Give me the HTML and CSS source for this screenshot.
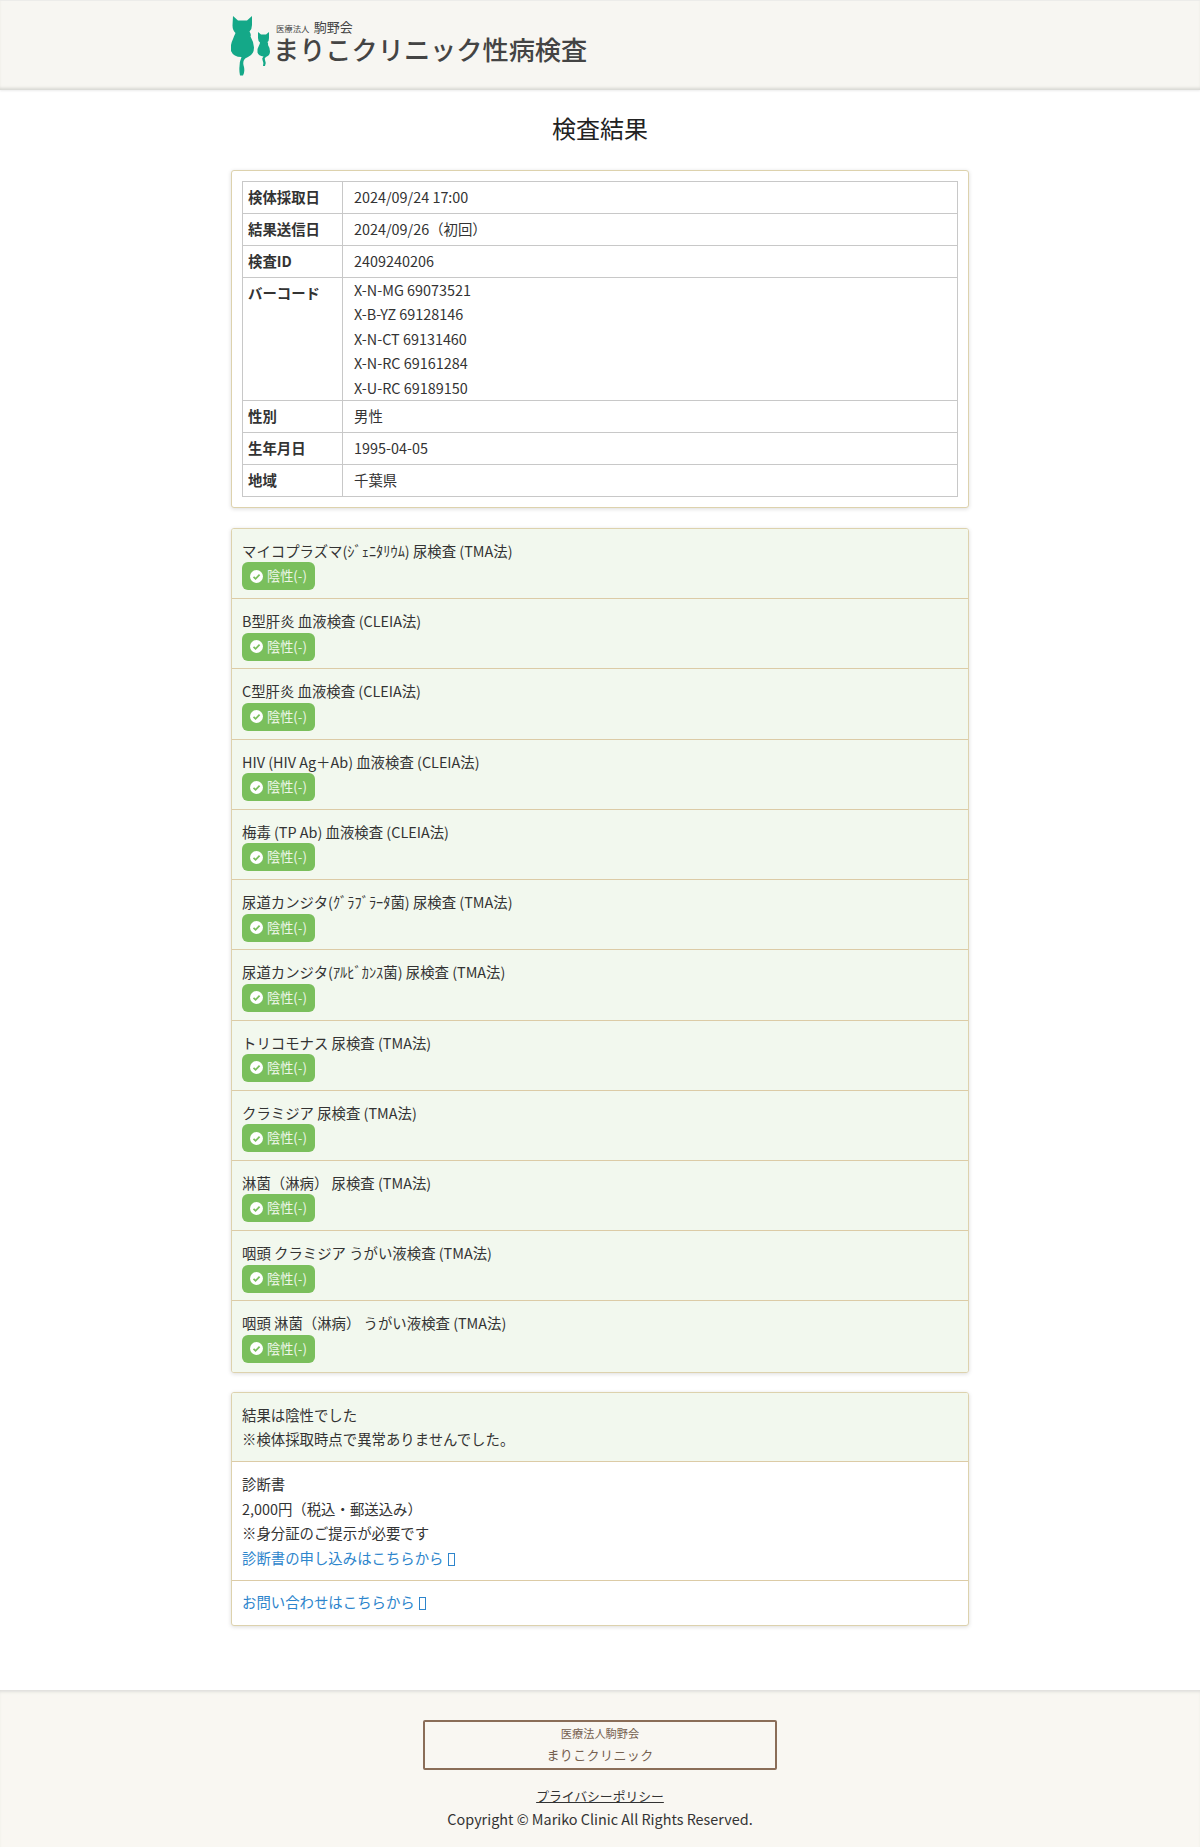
FILE: index.html
```html
<!DOCTYPE html>
<html lang="ja">
<head>
<meta charset="utf-8">
<title>検査結果</title>
<link rel="stylesheet" href="styles.css">
</head>
<body>
<svg class="defs" width="0" height="0" aria-hidden="true">
  <symbol id="check" viewBox="0 0 24 24"><circle cx="12" cy="12" r="12" fill="#fff"/><path d="M6.5 12.5l3.8 3.8 7.4-7.6" fill="none" stroke="#7abf5c" stroke-width="3.2"/></symbol>
</svg>
<header class="site-header">
  <div class="logo">
    <svg class="cats" width="42" height="62" viewBox="0 0 42 62">
      <path fill="#14a888" d="M2 1l5 4.500h9l5-4.500v9q0 4-2.500 6.500q2 3 1 5q3 5 3.500 11q0 7-6 9.500q-3 1-4 3q-1.500 3 0 7q1 5-1 8.500h-3q-1-5-0.500-9q0-5 2-9.500q-8 0-10.500-6q-1-6 2-12q1.500-4 2.500-6q-3-3-3-7.500z"/>
      <path fill="#14a888" d="M27 17l3 2.500h5l3-2.500v6q0 3-1.500 4q1 2 .5 3q2 3 2 6.500q0 4-4 5.500q-2 1-1 3q1.500 3 0 6h-2q1-3-.5-6q-1-2 1-3.500q-5-.5-6-4q-.5-4 1.500-7q1-2 1-3q-2-1.500-2-4.500z"/>
    </svg>
    <div class="logo-text">
      <div class="logo-sub"><span class="logo-sub-s">医療法人</span> <span class="logo-sub-l">駒野会</span></div>
      <div class="logo-main">まりこクリニック性病検査</div>
    </div>
  </div>
</header>

<main class="page">
  <h1 class="title">検査結果</h1>

  <section class="card card-info">
    <table class="info">
      <tr><th>検体採取日</th><td>2024/09/24 17:00</td></tr>
      <tr><th>結果送信日</th><td>2024/09/26（初回）</td></tr>
      <tr><th>検査ID</th><td>2409240206</td></tr>
      <tr><th>バーコード</th><td>X-N-MG 69073521<br>X-B-YZ 69128146<br>X-N-CT 69131460<br>X-N-RC 69161284<br>X-U-RC 69189150</td></tr>
      <tr><th>性別</th><td>男性</td></tr>
      <tr><th>生年月日</th><td>1995-04-05</td></tr>
      <tr><th>地域</th><td>千葉県</td></tr>
    </table>
  </section>

  <section class="card card-list">
    <div class="item"><div>マイコプラズマ(ｼﾞｪﾆﾀﾘｳﾑ) 尿検査 (TMA法)</div><span class="badge"><svg class="ck"><use href="#check"/></svg>陰性(-)</span></div>
    <div class="item"><div>B型肝炎 血液検査 (CLEIA法)</div><span class="badge"><svg class="ck"><use href="#check"/></svg>陰性(-)</span></div>
    <div class="item"><div>C型肝炎 血液検査 (CLEIA法)</div><span class="badge"><svg class="ck"><use href="#check"/></svg>陰性(-)</span></div>
    <div class="item"><div>HIV (HIV Ag＋Ab) 血液検査 (CLEIA法)</div><span class="badge"><svg class="ck"><use href="#check"/></svg>陰性(-)</span></div>
    <div class="item"><div>梅毒 (TP Ab) 血液検査 (CLEIA法)</div><span class="badge"><svg class="ck"><use href="#check"/></svg>陰性(-)</span></div>
    <div class="item"><div>尿道カンジタ(ｸﾞﾗﾌﾞﾗｰﾀ菌) 尿検査 (TMA法)</div><span class="badge"><svg class="ck"><use href="#check"/></svg>陰性(-)</span></div>
    <div class="item"><div>尿道カンジタ(ｱﾙﾋﾞｶﾝｽ菌) 尿検査 (TMA法)</div><span class="badge"><svg class="ck"><use href="#check"/></svg>陰性(-)</span></div>
    <div class="item"><div>トリコモナス 尿検査 (TMA法)</div><span class="badge"><svg class="ck"><use href="#check"/></svg>陰性(-)</span></div>
    <div class="item"><div>クラミジア 尿検査 (TMA法)</div><span class="badge"><svg class="ck"><use href="#check"/></svg>陰性(-)</span></div>
    <div class="item"><div>淋菌（淋病） 尿検査 (TMA法)</div><span class="badge"><svg class="ck"><use href="#check"/></svg>陰性(-)</span></div>
    <div class="item"><div>咽頭 クラミジア うがい液検査 (TMA法)</div><span class="badge"><svg class="ck"><use href="#check"/></svg>陰性(-)</span></div>
    <div class="item"><div>咽頭 淋菌（淋病） うがい液検査 (TMA法)</div><span class="badge"><svg class="ck"><use href="#check"/></svg>陰性(-)</span></div>
  </section>

  <section class="card">
    <div class="block block-green">結果は陰性でした<br>※検体採取時点で異常ありませんでした。</div>
    <div class="block">診断書<br>2,000円（税込・郵送込み）<br>※身分証のご提示が必要です<br><a class="link" href="#">診断書の申し込みはこちらから <span class="tofu"></span></a></div>
    <div class="block"><a class="link" href="#">お問い合わせはこちらから <span class="tofu"></span></a></div>
  </section>
</main>

<footer class="site-footer">
  <a class="clinic" href="#"><span class="clinic-sub">医療法人駒野会</span><span class="clinic-name">まりこクリニック</span></a>
  <a class="privacy" href="#">プライバシーポリシー</a>
  <div class="copy">Copyright © Mariko Clinic All Rights Reserved.</div>
</footer>
</body>
</html>
```
FILE: styles.css
```css
* { box-sizing: border-box; }
html, body { margin: 0; padding: 0; }
body {
  font-family: "Noto Sans CJK JP", "Noto Sans", sans-serif;
  font-size: 14.400px;
  line-height: 24.480px;
  color: #333;
  background: #fff;
}
.defs { position: absolute; }

.site-header {
  height: 90px;
  background: #f7f6f2;
  box-shadow: inset 0 -3px 3px -1px #d8d8d3, 0 1px 2px rgba(0,0,0,.08);
  border-top: 1px solid #ececea;
}
.logo { width: 738px; margin: 0 auto; display: flex; padding-top: 14px; }
.cats { flex: none; }
.logo-text { margin-left: 0; color: #444; }
.logo-sub { height: 18px; line-height: 18px; margin-top: 2px; padding-left: 3px; }
.logo-sub-s { font-size: 8.400px; margin-right: 1px; }
.logo-sub-l { font-size: 13px; }
.logo-main { font-size: 26.200px; line-height: 26px; font-weight: 500; white-space: nowrap; margin-top: 1px; }

.page { width: 738px; margin: 0 auto; padding-top: 20px; }
.title { margin: 0 0 24px; font-size: 24px; line-height: 36px; font-weight: 400; text-align: center; color: #222; }

.card {
  border: 1px solid #ddd2ad;
  border-radius: 3px;
  box-shadow: 0 1px 4px rgba(0,0,0,.14);
  margin-bottom: 21px;
  background: #fff;
  overflow: hidden;
}
.card-info { padding: 10px; margin-bottom: 20.400px; }
.card-list { margin-bottom: 19.500px; }

.info { width: 100%; border-collapse: collapse; }
.info th, .info td { border: 1px solid #c8c8c8; text-align: left; font-size: 14.400px; line-height: 24.480px; }
.info th { width: 100px; font-weight: 700; vertical-align: top; padding: 3.200px 5px; }
.info td { padding: 0 5px 0 11px; vertical-align: middle; }

.item { background: #f2f8ee; padding: 10px 10px 0; height: 70.220px; border-bottom: 1px solid #dccba6; }
.item:last-child { border-bottom: 0; }
.badge {
  display: inline-flex;
  align-items: center;
  height: 28px;
  margin-top: -1px;
  padding: 0 8.500px 0 8px;
  border-radius: 6px;
  background: #7abf5c;
  color: #edf6e8;
  font-size: 13.200px;
  line-height: 28px;
  vertical-align: top;
}
.ck { width: 13px; height: 13px; margin-right: 4px; flex: none; }

.block { padding: 9.700px 10px; border-bottom: 1px solid #dccba6; }
.block:last-child { border-bottom: 0; }
.block-green { background: #f2f8ee; }
.link { color: #2d85cc; text-decoration: none; }
.tofu { display: inline-block; width: 7px; height: 13px; margin-left: 1px; border: 1px solid currentColor; vertical-align: -2px; }

.site-footer {
  margin-top: 64px;
  height: 157px;
  background: #f9f7f2;
  box-shadow: inset 0 3px 3px -1px #dfdfdb;
  padding-top: 30px;
  text-align: center;
}
.clinic {
  display: flex;
  flex-direction: column;
  align-items: center;
  width: 354px;
  height: 50px;
  margin: 0 auto 15px;
  border: 2px solid #8a6d58;
  border-radius: 2px;
  color: #75604f;
  text-decoration: none;
  padding-top: 2px;
}
.clinic-sub { font-size: 11.200px; line-height: 18px; }
.clinic-name { font-size: 13px; line-height: 22px; letter-spacing: .4px; margin-top: 2px; }
.privacy { color: #333; display: inline-block; font-size: 12.800px; line-height: 22px; text-decoration: underline; vertical-align: top; }
.copy { font-size: 14.400px; line-height: 20px; }
```
